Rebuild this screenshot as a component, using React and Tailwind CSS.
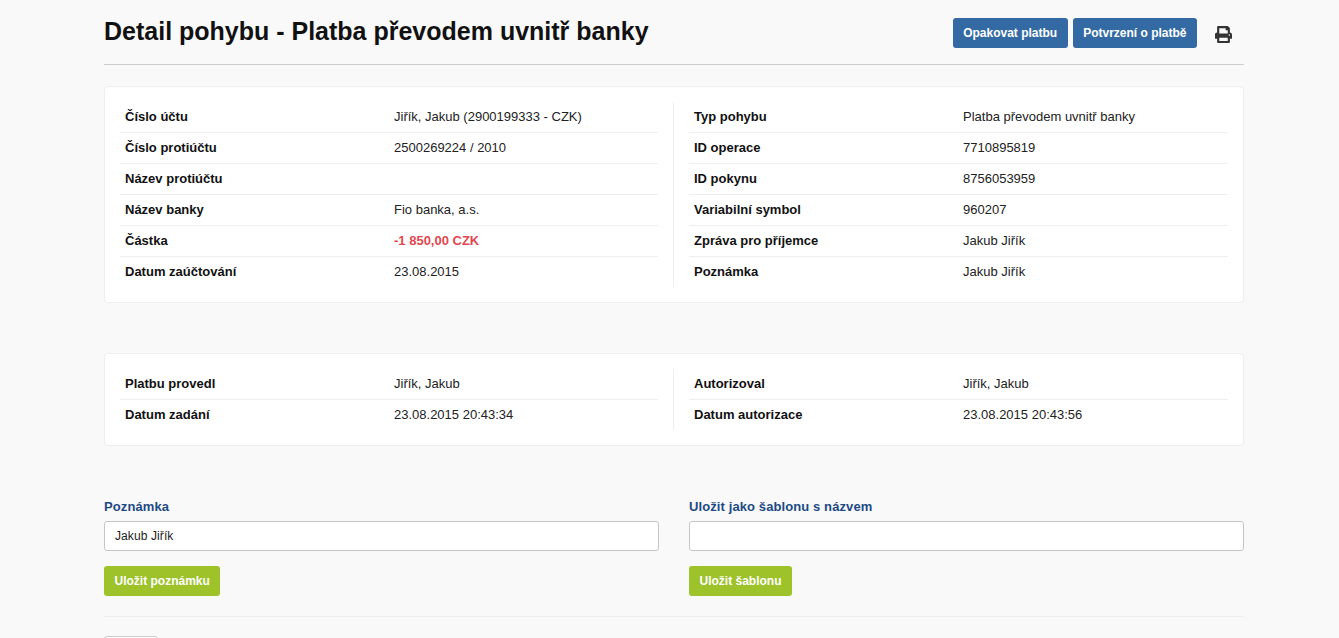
import { FaPrint } from 'react-icons/fa';

const mainLeft = [
  ['Číslo účtu', 'Jiřík, Jakub (2900199333 - CZK)'],
  ['Číslo protiúčtu', '2500269224 / 2010'],
  ['Název protiúčtu', ''],
  ['Název banky', 'Fio banka, a.s.'],
  ['Částka', '-1 850,00 CZK', true],
  ['Datum zaúčtování', '23.08.2015'],
];

const mainRight = [
  ['Typ pohybu', 'Platba převodem uvnitř banky'],
  ['ID operace', '7710895819'],
  ['ID pokynu', '8756053959'],
  ['Variabilní symbol', '960207'],
  ['Zpráva pro příjemce', 'Jakub Jiřík'],
  ['Poznámka', 'Jakub Jiřík'],
];

const authLeft = [
  ['Platbu provedl', 'Jiřík, Jakub'],
  ['Datum zadání', '23.08.2015 20:43:34'],
];

const authRight = [
  ['Autorizoval', 'Jiřík, Jakub'],
  ['Datum autorizace', '23.08.2015 20:43:56'],
];

const Rows = ({ rows }) => (
  <div className="flex-1">
    {rows.map(([label, value, negative]) => (
      <div key={label} className="flex h-[31px] items-center border-b border-[#eeeeee] pl-[5px] last:h-[30px] last:border-b-0">
        <div className="w-[269px] shrink-0 font-bold text-[#111111]">{label}</div>
        <div className={negative ? 'font-bold text-[#e2474f]' : 'text-[#222222]'}>{value}</div>
      </div>
    ))}
  </div>
);

const Card = ({ left, right, className }) => (
  <div className={`flex rounded border border-[#eeeeee] bg-white p-[15px] ${className}`}>
    <div className="flex w-[554px] shrink-0 border-r border-[#eeeeee] pr-[15px]">
      <Rows rows={left} />
    </div>
    <div className="flex flex-1 pl-[15px]">
      <Rows rows={right} />
    </div>
  </div>
);

const BlueButton = ({ children }) => (
  <button className="h-[30px] rounded-[3px] bg-[#346aa3] px-[10.5px] text-[12px] font-bold text-white">{children}</button>
);

const GreenButton = ({ children }) => (
  <button className="h-[30px] rounded-[3px] bg-[#9dc22a] px-[10.5px] text-[12px] font-bold text-white">{children}</button>
);

const Field = ({ label, value, button, className }) => (
  <div className={className}>
    <label className="block h-[22px] text-[13px] leading-[15px] font-bold tracking-[0.1px] text-[#1d4a85]">{label}</label>
    <input
      readOnly
      value={value}
      className="block h-[30px] w-full rounded-[3px] border border-[#c6c6c6] bg-white px-[10px] text-[12px] tracking-[0.1px] text-[#222222] outline-none"
    />
    <div className="mt-[15px]">
      <GreenButton>{button}</GreenButton>
    </div>
  </div>
);

export default function App() {
  return (
    <div className="h-[638px] overflow-hidden bg-[#f9f9f9] font-['Liberation_Sans',Arial,sans-serif] text-[13px]">
      <div className="ml-[104px] w-[1140px]">
        <div className="flex h-[65px] items-start justify-between border-b border-[#cccccc]">
          <h1 className="mt-[16px] text-[25px] leading-[30px] font-bold text-[#111111]">
            Detail pohybu - Platba převodem uvnitř banky
          </h1>
          <div className="mt-[18px] flex items-start">
            <BlueButton>Opakovat platbu</BlueButton>
            <div className="ml-[5px]">
              <BlueButton>Potvrzení o platbě</BlueButton>
            </div>
            <FaPrint className="mt-[8px] ml-[18px] mr-[12px] text-[#333333]" size={17} />
          </div>
        </div>

        <Card left={mainLeft} right={mainRight} className="mt-[21px]" />
        <Card left={authLeft} right={authRight} className="mt-[50px]" />

        <div className="mt-[53px] flex justify-between">
          <Field label="Poznámka" value="Jakub Jiřík" button="Uložit poznámku" className="w-[555px]" />
          <Field label="Uložit jako šablonu s názvem" value="" button="Uložit šablonu" className="w-[555px]" />
        </div>

        <div className="mt-[20px] border-t border-[#eeeeee]" />
        <button className="mt-[19px] h-[30px] w-[54px] rounded-[3px] border border-[#cccccc] bg-white" />
      </div>
    </div>
  );
}
